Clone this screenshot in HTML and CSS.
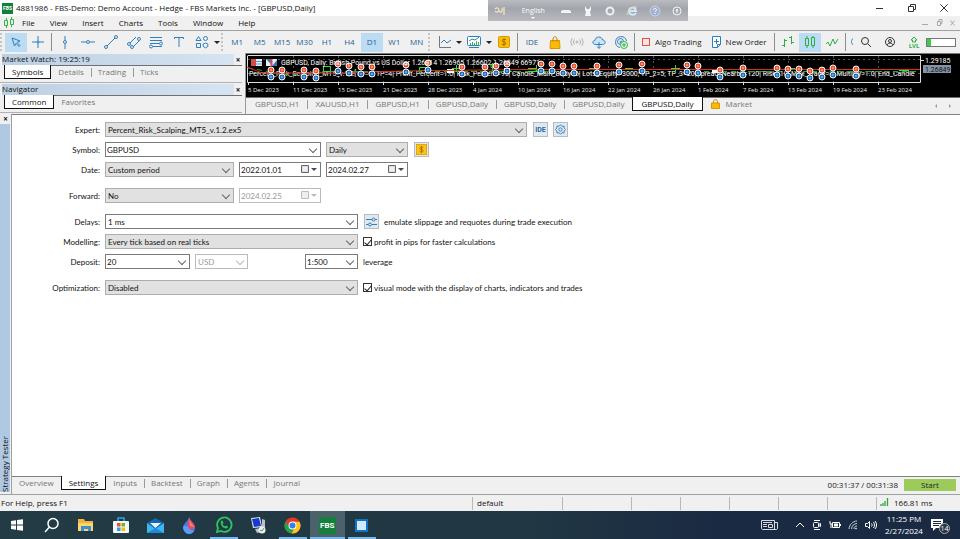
FILE: index.html
```html
<!DOCTYPE html>
<html lang="en">
<head>
  <meta charset="UTF-8" />
  <meta name="viewport" content="width=device-width, initial-scale=1" />
  <title>4881986 - FBS-Demo: Demo Account - Hedge - FBS Markets Inc. - [GBPUSD,Daily]</title>
  <link rel="stylesheet" href="styles.css">
</head>
<body>
  <header class="titlebar">
    <span class="fbs-logo">FBS</span>
    <h1>4881986 - FBS-Demo: Demo Account - Hedge - FBS Markets Inc. - [GBPUSD,Daily]</h1>
    <div class="window-buttons">
      <button aria-label="Minimize"><svg width="8" height="8" viewBox="0 0 8 8"><path d="M0 4.5h7"/></svg></button>
      <button aria-label="Restore"><svg width="8" height="8" viewBox="0 0 8 8"><path d="M.5 2.5h5v5h-5zM2.5 2.500v-2h5v5h-2"/></svg></button>
      <button aria-label="Close"><svg width="8" height="8" viewBox="0 0 8 8"><path d="M.5.5l7 7M7.500.5l-7 7"/></svg></button>
    </div>
  </header>

  <div class="langbar">
    <svg width="14" height="12" viewBox="0 0 14 12" fill="none" stroke="#f3e3c4" stroke-width="1.300"><path d="M2 4c2-2 4-1 4 1s-3 3-4 1M6 6c2 3 4 0 3-3M11 2v8"/></svg>
    <span class="lang">English</span>
    <svg width="12" height="12" viewBox="0 0 12 12" fill="#f4f5f6"><path d="M1 8V6l2-1h6l2 1v2z"/></svg>
    <svg width="12" height="12" viewBox="0 0 12 12" fill="#f4f5f6"><path d="M3 1l2 3h2l2-3v4l-1 2 1 4H3l1-4-1-2z"/></svg>
    <svg width="12" height="12" viewBox="0 0 12 12" fill="none" stroke="#eef0f2" stroke-width="2"><circle cx="6" cy="6" r="3.500"/></svg>
    <svg width="12" height="12" viewBox="0 0 12 12" fill="none" stroke="#cfe9f8" stroke-width="2"><path d="M10 8c-2 3-7 2-7-2s6-5 7 0H4"/><path d="M1 10C1 6 6 1 11 2" stroke="#e9d9a6" stroke-width="1"/></svg>
    <svg width="12" height="12" viewBox="0 0 12 12"><circle cx="6" cy="6" r="5" fill="#a3b2d4" stroke="#ccd3e2"/><path d="M4.500 5c0-2 3-2 3 0 0 1-1.500 1-1.500 2M6 8v1" fill="none" stroke="#fff"/></svg>
    <svg width="12" height="12" viewBox="0 0 12 12" fill="none" stroke="#f4f5f6"><circle cx="6" cy="6" r="4"/><path d="M6 4v4M5 6l1-2 1 2"/></svg>
  </div>

  <nav class="menubar">
    <svg width="12" height="12" viewBox="0 0 12 12" fill="none" stroke="#35b44a"><path d="M3.500 1v2M3.500 9v2M1.500 3.500h3v5h-3zM8.500 0v2M8.500 8v2M7.500 2.500h3v5h-3z"/></svg>
    <button>File</button>
    <button>View</button>
    <button>Insert</button>
    <button>Charts</button>
    <button>Tools</button>
    <button>Window</button>
    <button>Help</button>
    <svg class="mdi" width="36" height="8" viewBox="0 0 36 8" fill="none" stroke="#a9a9a9"><path d="M1 5.500h6M16.500 2.500h3v4h-3zM18 2V.5h3v4h-1M29.500 1.500l4 5M33.500 1.500l-4 5"/></svg>
  </nav>

  <div class="toolbar">
    <i class="grip"></i>
    <button class="tool on" aria-label="Cursor"><svg width="14" height="14" viewBox="0 0 14 14"><path d="M3 3l8 3-3 1.500 3 3-1 1-3-3L5.500 11z"/></svg></button>
    <button class="tool" aria-label="Crosshair"><svg width="14" height="14" viewBox="0 0 14 14"><path d="M7 1v12M1 7h12"/><circle cx="7" cy="7" r="1" fill="#f0f0f0"/></svg></button>
    <i class="sep"></i>
    <div class="draw-tools">
      <button class="tool" aria-label="Vertical line"><svg width="14" height="14" viewBox="0 0 14 14"><path d="M7 1v4M7 9v5"/><circle cx="7" cy="7" r="1.500"/></svg></button>
      <button class="tool" aria-label="Horizontal line"><svg width="14" height="14" viewBox="0 0 14 14"><path d="M0 7h5M9 7h5"/><circle cx="7" cy="7" r="1.500"/></svg></button>
      <button class="tool" aria-label="Trendline"><svg width="14" height="14" viewBox="0 0 14 14"><path d="M3 11l8-8"/><circle cx="2" cy="12" r="1.500"/><circle cx="12" cy="2" r="1.500"/></svg></button>
      <button class="tool" aria-label="Channel"><svg width="14" height="14" viewBox="0 0 14 14"><path d="M3 8l6-6M6 12l6-6"/><circle cx="2" cy="9" r="1.500"/><circle cx="5" cy="12" r="1.500"/><circle cx="12" cy="4" r="1.500"/></svg></button>
      <button class="tool" aria-label="Fibonacci"><svg width="14" height="14" viewBox="0 0 14 14"><path d="M1 2.500h12M1 5.500h12M1 8.500h9M4 11.500h9"/><circle cx="2" cy="11.500" r="1.500"/><circle cx="12" cy="8.500" r="1.500"/></svg></button>
      <button class="tool" aria-label="Text"><svg width="14" height="14" viewBox="0 0 14 14"><path d="M2.500 4V2.500h9V4M7 2.500V12"/></svg></button>
      <button class="tool" aria-label="Objects"><svg width="14" height="14" viewBox="0 0 14 14"><path d="M1 5.500l2.500-4 2.500 4zM1.500 8.500h4v4h-4z"/><circle cx="10.500" cy="3.500" r="2"/><path d="M10.500 8l2.300 1v2.500l-2.300 1.300-2.300-1.300V9z"/></svg></button>
    </div>
    <i class="drop"></i>
    <i class="grip"></i>
    <div class="timeframes">
      <button>M1</button>
      <button>M5</button>
      <button>M15</button>
      <button>M30</button>
      <button>H1</button>
      <button>H4</button>
      <button class="on">D1</button>
      <button>W1</button>
      <button>MN</button>
    </div>
    <i class="grip"></i>
    <button class="tool" aria-label="Chart type"><svg width="14" height="14" viewBox="0 0 14 14"><path d="M2.500 1v11.500H14" stroke="#777"/><path d="M4 8l3-3 3 3 4-3"/></svg></button>
    <i class="drop"></i>
    <button class="tool" aria-label="Template"><svg width="14" height="14" viewBox="0 0 14 14"><rect x=".5" y="1.500" width="13" height="9" rx="1" fill="#fff"/><path d="M2 12.500h10"/><path d="M2 6l3-2 3 1 4-3"/><path d="M3.500 10V8M5.500 10V7M7.500 10V8M9.500 10V6M11.500 10V7" stroke="#35b44a"/></svg></button>
    <i class="drop"></i>
    <button class="tool" aria-label="Symbol"><svg width="12" height="12" viewBox="0 0 12 12"><rect x=".5" y=".5" width="11" height="11" rx="1" fill="#fbbd08" stroke="#d89a00"/><path d="M8 3.500H5C4 3.500 4 6 5 6h2c1 0 1 2.500 0 2.500H4M6 2v8" stroke="#a87000"/></svg></button>
    <i class="sep"></i>
    <button class="tool ide">IDE</button>
    <button class="tool" aria-label="Market"><svg width="12" height="13" viewBox="0 0 12 13"><path d="M1.500 4.500h9l.5 8H1z" fill="#fbb908" stroke="#dc9400"/><path d="M4 6V3c0-3 4-3 4 0v3" stroke="#c98300"/></svg></button>
    <button class="tool muted" aria-label="Signals"><svg width="14" height="12" viewBox="0 0 14 12"><circle cx="7" cy="6" r="1"/><path d="M4.500 3.500c-1.300 1.500-1.300 3.500 0 5M9.500 3.500c1.300 1.500 1.300 3.500 0 5M2.500 2c-2 2.500-2 5.500 0 8M11.500 2c2 2.500 2 5.500 0 8"/></svg></button>
    <button class="tool" aria-label="VPS"><svg width="14" height="14" viewBox="0 0 14 14"><path d="M4 9.500C0 9.500 0 5.500 3 5.500c0-4 7-5 7.500-.5 3.500 0 3.500 4.500 0 4.500z" fill="#cfe6f8"/><path d="M7 7v6M5 11.500l2 2 2-2"/></svg></button>
    <button class="tool" aria-label="Community"><svg width="14" height="14" viewBox="0 0 14 14"><path d="M6 12.500A5.500 5.500 0 1 1 12.500 6M6 9.500A3 3 0 1 1 9.500 6"/><circle cx="7" cy="7" r="1"/><circle cx="10" cy="10" r="3.500" fill="#e6f7e8" stroke="#35b44a"/><path d="M10 8v4M8 10h4" stroke="#35b44a"/></svg></button>
    <i class="sep"></i>
    <button class="text-tool"><svg width="9" height="9" viewBox="0 0 9 9"><rect x=".5" y=".5" width="7" height="7" fill="#fbe3dd" stroke="#d9534a"/></svg>Algo Trading</button>
    <button class="text-tool"><svg width="10" height="12" viewBox="0 0 10 12"><path d="M.5.5h8v8l-3 3h-5z" fill="#fff"/><path d="M4.500 3v5M2 5.500h5M8.500 8.500h-3v3"/></svg>New Order</button>
    <i class="sep"></i>
    <button class="tool green" aria-label="Bars"><svg width="14" height="14" viewBox="0 0 14 14"><path d="M3.500 4v8M1 10.500h2.500M3.500 5.500H6M10.500 1v8M8 2.500h2.500M10.500 7.500H13"/></svg></button>
    <button class="tool green on" aria-label="Candles"><svg width="14" height="14" viewBox="0 0 14 14"><path d="M2.500 3.500h3v7h-3zM4 1v2.500M4 10.500V13M8.500 2.500h3v8h-3zM10 1v1.500M10 10.500V13"/></svg></button>
    <button class="tool green" aria-label="Line"><svg width="14" height="14" viewBox="0 0 14 14"><path d="M1 9l2-2 2 4 3-7 2 5 3-5"/></svg></button>
    <i class="sep"></i>
    <div class="toolbar-end">
      <svg width="4" height="8" viewBox="0 0 4 8"><path d="M3 .5C1 2 1 5 3 7"/></svg>
      <button class="tool dark" aria-label="Search"><svg width="12" height="12" viewBox="0 0 12 12"><circle cx="5" cy="5" r="3.500"/><path d="M7.500 7.500L11 11"/></svg></button>
      <button class="tool dark" aria-label="Account"><svg width="12" height="12" viewBox="0 0 12 12"><circle cx="6" cy="6" r="4.500"/><circle cx="6" cy="5" r="1.500"/><path d="M3 9c1-2.500 5-2.500 6 0"/></svg></button>
      <button class="tool lvl" aria-label="Level"><svg width="8" height="7" viewBox="0 0 8 7"><path d="M2.500 6V4H1l3-3 3 3H5.500v2z"/></svg><span>LVL</span></button>
      <div class="level-bar"><i></i></div>
    </div>
  </div>

  <div class="workspace">
    <aside class="docks">
      <section class="dock">
        <div class="caption"><h2>Market Watch: 19:25:19</h2><button aria-label="Close">×</button></div>
        <div class="tabs">
          <button class="active">Symbols</button>
          <button>Details</button>
          <button>Trading</button>
          <button>Ticks</button>
        </div>
      </section>
      <section class="dock">
        <div class="caption"><h2>Navigator</h2><button aria-label="Close">×</button></div>
        <div class="tabs">
          <button class="active">Common</button>
          <button>Favorites</button>
        </div>
      </section>
    </aside>

    <main class="chart-pane">
      <svg class="chart" viewBox="0 0 714 44">
        <defs>
          <clipPath id="plot"><rect x="1" y="2" width="673" height="28"/></clipPath>
          <!-- sell mark above, buy mark below -->
          <g id="deal">
            <circle r="3" fill="#e8502e" stroke="#fff"/>
            <circle cy="7" r="3" fill="#1f6fbe" stroke="#fff"/>
            <path d="M0-1v2M-1 0h2M0 6v2M-1 7h2" fill="none" stroke="#fff" stroke-width=".4"/>
          </g>
        </defs>
        <rect width="714" height="44" fill="#000"/>
        <path d="M0 .5h714" stroke="#777"/>
        <path d="M2 6.500h672M2 20.500h672M47.500 3v26M92.500 3v26M137.500 3v26M182.500 3v26M227.500 3v26M272.500 3v26M317.500 3v26M362.500 3v26M407.500 3v26M452.500 3v26M497.500 3v26M542.500 3v26M587.500 3v26M632.500 3v26" stroke="#555" stroke-dasharray="2 3"/>
        <path d="M1.500 3v26.500h673V2.500H1.500" fill="none" stroke="#ddd"/>
        <path d="M2.500 29v3M47.500 29v3M92.500 29v3M137.500 29v3M182.500 29v3M227.500 29v3M272.500 29v3M317.500 29v3M362.500 29v3M407.500 29v3M452.500 29v3M497.500 29v3M542.500 29v3M587.500 29v3M632.500 29v3" stroke="#ddd"/>
        <g clip-path="url(#plot)">
          <text x="3" y="23" class="chart-comment">Percent_Risk_Scalping_MT5_v.1.2[TP=5] TP=4| Profit_Percent=1.0| Risk_Percent=95| Candle_Main_Body=6| Lots_Equity=3000; TP_2=5; TP_3=20|Spread_Nearby=120| Risk=10| Max_Trade=1| Multiply=1.0| End_Candle</text>
          <path d="M90 18.500h230M440 18.500h230M2 15l40 7 50-4" fill="none" stroke="#1fae2a" stroke-dasharray="5 4"/>
          <path d="M77.500 13.500h7v5h-7zM173.500 14.500h7v3h-7zM206 15.500h9M245 11.500h7v3h-7zM282 15.500h8v3h-8M343 15.500h7M379 15.500h8M425 15.500h9M477 16.500h7M541 15.500h8M653 17.500h10M210.500 12v7M246.500 10v8M290.500 12v7M429.500 12v7" fill="#000" stroke="#32e23c"/>
          <path d="M201 16h7v4h-7zM258 15h6v3h-6zM466 17h6v3h-6z" fill="#fff"/>
          <path d="M1 14l15 6h80l60-2 120-1.500h398" fill="none" stroke="#e0281c"/>
          <use href="#deal" x="25" y="17"/><use href="#deal" x="36" y="17"/><use href="#deal" x="58" y="17"/><use href="#deal" x="70" y="18"/>
          <use href="#deal" x="92" y="11"/><use href="#deal" x="103" y="13"/><use href="#deal" x="115" y="14"/><use href="#deal" x="126" y="14"/>
          <use href="#deal" x="160" y="12"/><use href="#deal" x="182" y="10"/><use href="#deal" x="216" y="14"/><use href="#deal" x="239" y="14"/>
          <use href="#deal" x="250" y="13"/><use href="#deal" x="261" y="11"/><use href="#deal" x="295" y="11"/><use href="#deal" x="306" y="11"/>
          <use href="#deal" x="317" y="13"/><use href="#deal" x="328" y="13"/><use href="#deal" x="351" y="13"/><use href="#deal" x="373" y="12"/>
          <use href="#deal" x="396" y="11"/><use href="#deal" x="441" y="12"/><use href="#deal" x="452" y="13"/><use href="#deal" x="474" y="17"/>
          <use href="#deal" x="497" y="15"/><use href="#deal" x="531" y="15"/><use href="#deal" x="542" y="16"/><use href="#deal" x="553" y="16"/>
          <use href="#deal" x="564" y="18"/><use href="#deal" x="576" y="17"/><use href="#deal" x="587" y="15"/><use href="#deal" x="610" y="16"/>
        </g>
        <path d="M5 6h11v7H5z" fill="#e9eef5"/><path d="M5 6h5v7H5z" fill="#d84a43"/><path d="M10 8.500h6M10 11h6" stroke="#5a8fd0"/>
        <path d="M20 6h11v7H20z" fill="#e9eef5"/><path d="M20 6h5v5zM26 13h5V7z" fill="#3776bd"/><path d="M25.500 6v7" stroke="#d84a43" stroke-width="2"/>
        <text x="35" y="12" class="chart-comment">GBPUSD, Daily:  British Pound vs US Dollar  1.26814 1.26965 1.26602 1.26849  66971</text>
        <g class="chart-dates">
          <text x="2" y="39">5 Dec 2023</text><text x="47" y="39">11 Dec 2023</text><text x="92" y="39">15 Dec 2023</text>
          <text x="137" y="39">21 Dec 2023</text><text x="182" y="39">28 Dec 2023</text><text x="227" y="39">4 Jan 2024</text>
          <text x="272" y="39">10 Jan 2024</text><text x="317" y="39">16 Jan 2024</text><text x="362" y="39">22 Jan 2024</text>
          <text x="407" y="39">26 Jan 2024</text><text x="452" y="39">1 Feb 2024</text><text x="497" y="39">7 Feb 2024</text>
          <text x="542" y="39">13 Feb 2024</text><text x="587" y="39">19 Feb 2024</text><text x="632" y="39">23 Feb 2024</text>
        </g>
        <path d="M675 7.500h3" stroke="#ddd"/>
        <rect x="677" y="12" width="28" height="8" fill="#8593a8"/>
        <text x="679" y="10" class="chart-comment">1.29185</text>
        <text x="679" y="19" class="chart-price">1.26849</text>
      </svg>
      <div class="tabs chart-tabs">
        <button>GBPUSD,H1</button>
        <button>XAUUSD,H1</button>
        <button>GBPUSD,H1</button>
        <button>GBPUSD,Daily</button>
        <button>GBPUSD,Daily</button>
        <button>GBPUSD,Daily</button>
        <button class="active">GBPUSD,Daily</button>
        <button class="market"><svg width="9" height="10" viewBox="0 0 9 10"><path d="M.5 4h8v5.500h-8z" fill="#fbb908" stroke="#dc9400"/><path d="M2.500 4V2.500c0-2.500 4-2.500 4 0V4" fill="none" stroke="#c98300"/></svg>Market</button>
        <svg class="scroll" width="18" height="6" viewBox="0 0 18 6" fill="#999"><path d="M3 1v4L1 3zM15 1v4l2-2z"/></svg>
      </div>
    </main>
  </div>

  <section class="tester">
    <div class="tester-side">
      <button aria-label="Close">×</button>
      <h2>Strategy Tester</h2>
    </div>
    <div class="tester-main">
      <form class="settings">
        <div class="row">
          <label for="expert">Expert:</label>
          <span class="combo gray w-expert"><select id="expert"><option>Percent_Risk_Scalping_MT5_v.1.2.ex5</option></select></span>
          <button type="button" class="square">IDE</button>
          <button type="button" class="square" aria-label="Expert properties"><svg width="11" height="11" viewBox="0 0 12 12"><path d="M6 .8l1.500 1.700 2.300-.3.200 2.200L11.500 6 10 7.600l-.2 2.200-2.300-.3L6 11.200 4.500 9.500l-2.300.3L2 7.600.5 6 2 4.400l.2-2.200 2.300.3z"/><circle cx="6" cy="6" r="1.800"/></svg></button>
        </div>
        <div class="row">
          <label for="symbol">Symbol:</label>
          <span class="combo w-symbol"><input id="symbol" type="text" value="GBPUSD"></span>
          <span class="combo gray w-date"><select aria-label="Period"><option>Daily</option></select></span>
          <button type="button" class="square" aria-label="Symbol specification"><svg width="11" height="11" viewBox="0 0 12 12"><rect x=".5" y=".5" width="11" height="11" fill="#fcc419" stroke="#e0a400"/><path d="M8 3.500H5C4 3.500 4 6 5 6h2c1 0 1 2.500 0 2.500H4M6 2v8" stroke="#a87000"/></svg></button>
        </div>
        <div class="row group-end">
          <label for="date">Date:</label>
          <span class="combo gray w-period"><select id="date"><option>Custom period</option></select></span>
          <span class="combo date w-date"><input type="text" aria-label="From" value="2022.01.01"><svg width="9" height="9" viewBox="0 0 9 9"><path d="M.5.5h7v7h-7z" fill="#dcdfe3" stroke="#666"/><path d="M2 3h4M2 5h4" stroke="#fff"/></svg></span>
          <span class="combo date w-date"><input type="text" aria-label="To" value="2024.02.27"><svg width="9" height="9" viewBox="0 0 9 9"><path d="M.5.5h7v7h-7z" fill="#dcdfe3" stroke="#666"/><path d="M2 3h4M2 5h4" stroke="#fff"/></svg></span>
        </div>
        <div class="row group-end">
          <label for="forward">Forward:</label>
          <span class="combo gray w-period"><select id="forward"><option>No</option></select></span>
          <span class="combo date off w-date"><input type="text" aria-label="Forward date" value="2024.02.25" disabled><svg width="9" height="9" viewBox="0 0 9 9"><path d="M.5.5h7v7h-7z" fill="#eee" stroke="#bbb"/></svg></span>
        </div>
        <div class="row">
          <label for="delays">Delays:</label>
          <span class="combo w-wide"><select id="delays"><option>1 ms</option></select></span>
          <button type="button" class="square" aria-label="Delay settings"><svg width="12" height="12" viewBox="0 0 12 12"><path d="M0 3.500h6M9 3.500h2M0 8.500h2M6 8.500h5"/><circle cx="7.500" cy="3.500" r="1.500"/><circle cx="4" cy="8.500" r="1.500"/></svg></button>
          <span class="note">emulate slippage and requotes during trade execution</span>
        </div>
        <div class="row">
          <label for="modelling">Modelling:</label>
          <span class="combo gray w-wide"><select id="modelling"><option>Every tick based on real ticks</option></select></span>
          <label class="check"><input type="checkbox" checked>profit in pips for faster calculations</label>
        </div>
        <div class="row group-end">
          <label for="deposit">Deposit:</label>
          <span class="combo w-deposit"><input id="deposit" type="text" value="20"></span>
          <span class="combo off w-small"><select aria-label="Currency" disabled><option>USD</option></select></span>
          <span class="combo w-small leverage"><input id="leverage" type="text" value="1:500"></span>
          <label class="after" for="leverage">leverage</label>
        </div>
        <div class="row">
          <label for="optimization">Optimization:</label>
          <span class="combo gray w-wide"><select id="optimization"><option>Disabled</option></select></span>
          <label class="check"><input type="checkbox" checked>visual mode with the display of charts, indicators and trades</label>
        </div>
      </form>
      <div class="tabs tester-tabs">
        <button>Overview</button>
        <button class="active">Settings</button>
        <button>Inputs</button>
        <button>Backtest</button>
        <button>Graph</button>
        <button>Agents</button>
        <button>Journal</button>
        <span class="elapsed">00:31:37 / 00:31:38</span>
        <button class="start">Start</button>
      </div>
    </div>
  </section>

  <footer class="statusbar">
    <span class="help">For Help, press F1</span>
    <span class="profile">default</span>
    <span class="wide"></span>
    <span></span>
    <span></span>
    <span></span>
    <span></span>
    <span></span>
    <span class="ping"><svg width="9" height="8" viewBox="0 0 9 8" stroke="#2fa63d"><path d="M1 8V6M3 8V5M5 8V3M7.500 8V0" stroke-width="1.300"/></svg>166.81 ms</span>
  </footer>

  <div class="taskbar">
    <div class="apps">
      <button aria-label="Start menu"><svg width="14" height="14" viewBox="0 0 14 14" fill="#fff"><path d="M1 3l5-.7v4.200H1zM7 2.100l6-.9v5.300H7zM1 7.500h5v4.200L1 11zM7 7.500h6v5.300l-6-.9z"/></svg></button>
      <button aria-label="Search"><svg width="16" height="16" viewBox="0 0 16 16" fill="none" stroke="#fff" stroke-width="1.500"><circle cx="9" cy="6.500" r="5"/><path d="M5.500 10L1 15"/></svg></button>
      <button aria-label="File Explorer"><svg width="16" height="14" viewBox="0 0 16 14"><path d="M0 1h6l1 2h8v10H0z" fill="#f0b43c"/><path d="M0 5h15v8H0z" fill="#fbd76b"/><path d="M3 13V8h10v5h-3v-2H6v2z" fill="#3b8fd4"/></svg></button>
      <button aria-label="Store"><svg width="16" height="16" viewBox="0 0 16 16"><path d="M5 4V1h6v3" fill="none" stroke="#27a7e7" stroke-width="1.500"/><rect y="4" width="16" height="12" rx="1" fill="#f4f6f8"/><path d="M4 6h3.500v3.500H4z" fill="#e8502f"/><path d="M8.500 6H12v3.500H8.500z" fill="#7cb518"/><path d="M4 10.500h3.500V14H4z" fill="#22a0e8"/><path d="M8.500 10.500H12V14H8.500z" fill="#fbb908"/></svg></button>
      <button aria-label="Mail"><svg width="17" height="15" viewBox="0 0 17 15"><path d="M0 5l8.500-5L17 5v10H0z" fill="#1467b3"/><path d="M3 5h11l-5.500 5z" fill="#e8f4fb"/><path d="M0 5l8.500 6L17 5v10H0z" fill="#3fb6ee"/><path d="M0 15l8.500-5L17 15z" fill="#1c8ad6"/></svg></button>
      <button aria-label="Paint"><svg width="14" height="17" viewBox="0 0 14 17"><path d="M7 0c1 4 6 6 6 11 0 3-3 6-6 6s-6-3-6-6c0-5 5-6 6-11z" fill="#3f7be0"/><path d="M7 0c1 4 6 6 6 11l-5 2C3 10 7 5 7 0z" fill="#e8467c"/><path d="M7 2c1 4 4 5 5 8l-4-1z" fill="#f58a3c"/><path d="M1.500 9c2-1 5 0 6 3 2 2 4 2 5 1-2 5-8 5-10 1-1-1-1.500-3-1-5z" fill="#5b9cf0"/></svg></button>
      <button class="open" aria-label="WhatsApp"><svg width="18" height="18" viewBox="0 0 18 18" fill="none"><path d="M2 16l1-4a7.200 7.200 0 1 1 3 3z" stroke="#2bc55c" stroke-width="1.800"/><path d="M6 5l1.500-.5 1 2.500-1 1c.5 1.500 1.500 2 2.500 2.500l1-1 2 1c0 2-2 2.500-4 1.500-2-1-4-4-3-7z" fill="#2bc55c"/></svg></button>
      <button aria-label="Remote setup"><svg width="17" height="17" viewBox="0 0 17 17"><path d="M1 1l9-1 2 10-9 1z" fill="#dfe5ec"/><path d="M2 2l7-1 2 8-7 1z" fill="#1439d4"/><path d="M12 2l3 1v9l-3 1zM5 12l8-1 1 3-7 2z" fill="#b9c2cc"/><circle cx="12" cy="13" r="3.500" fill="#eef2ee"/><path d="M10 13l2 1 2-3" stroke="#4b9c55" fill="none"/></svg></button>
      <button class="open" aria-label="Chrome"><svg width="17" height="17" viewBox="0 0 18 18"><circle cx="9" cy="9" r="8.500" fill="#e0382b"/><path d="M1.600 4.800A8.500 8.500 0 0 0 8 17.400L11.500 11 5 9z" fill="#22a34b"/><path d="M9 5h7.500A8.500 8.500 0 0 1 8 17.400l4-7z" fill="#fbc51b"/><circle cx="9" cy="9" r="4.200" fill="#fff"/><circle cx="9" cy="9" r="3.200" fill="#3d7de8"/></svg></button>
      <button class="open current" aria-label="FBS terminal"><span class="fbs-logo big">FBS</span></button>
      <button class="open" aria-label="Metatester"><svg width="13" height="13" viewBox="0 0 13 13"><path d="M0 0h13v13H0z" fill="#1173c4"/><path d="M2 2h9v9H2z" fill="#cfeaff"/></svg></button>
    </div>
    <div class="tray">
      <svg class="news" width="18" height="12" viewBox="0 0 18 12" fill="none" stroke="#d7dbe0"><path d="M.5 1.500h13v9H2C1 10.500.5 10 .5 9zM13.500 3.500h3V9c0 1-.5 1.500-1.500 1.500h-2M2 3.500h9M7.500 5.500h4v3h-4zM2 5.500h4M2 7.500h4"/></svg>
      <svg width="10" height="8" viewBox="0 0 10 8" fill="none" stroke="#fff"><path d="M1 6l4-4 4 4"/></svg>
      <svg width="10" height="12" viewBox="0 0 10 12" fill="none" stroke="#fff"><rect x="1.500" y="3.500" width="5" height="5" rx="1"/><path d="M6.500 5.500l2-1v3l-2-1M2 1.500h6M2 10.500h6"/></svg>
      <svg width="12" height="10" viewBox="0 0 12 10" fill="none" stroke="#fff"><path d="M3.500 2.500h7v5h-7zM11.500 4v2M1 1v3h2M2 4v4"/><path d="M5 5h4" stroke-width="3"/></svg>
      <svg width="10" height="10" viewBox="0 0 10 10" fill="none" stroke="#c3cad3"><path d="M1 9C1 5 5 1 9 1M3.500 9C3.500 6 6 3.500 9 3.500M6 9c0-2 1-3 3-3"/><circle cx="8" cy="8.500" r=".6" fill="#fff"/></svg>
      <svg width="12" height="10" viewBox="0 0 12 10" fill="none" stroke="#fff"><path d="M.5 3.500h2l2-2v7l-2-2h-2zM6.500 3.500c.8 1 .8 2 0 3M8.500 2c1.300 2 1.300 4 0 6M10 1c2 2.500 2 5.500 0 8"/></svg>
      <time class="clock"><span>11:25 PM</span><span>2/27/2024</span></time>
      <button class="notices" aria-label="Notifications"><svg width="13" height="12" viewBox="0 0 13 12"><path d="M0 0h12v9H5l-3 3V9H0z" fill="#fff"/><path d="M2 2.500h8M2 4.500h8M2 6.500h6" stroke="#1b2c42"/></svg><span class="badge">14</span></button>
    </div>
  </div>
</body>
</html>
```
FILE: styles.css
```css
* {
  box-sizing: border-box;
}
body {
  margin: 0;
  min-height: 100vh;
  display: flex;
  flex-direction: column;
  font-family: "Open Sans", sans-serif;
  font-size: 8px;
  line-height: 12px;
  color: #111;
  background: #f0f0f0;
  overflow: hidden;
}
h1, h2 {
  margin: 0;
  font-size: 8px;
  font-weight: normal;
}
button {
  padding: 0;
  border: none;
  background: none;
  font: inherit;
  color: inherit;
  white-space: nowrap;
}
button svg {
  display: block;
}

/* title and menu */
.titlebar {
  display: flex;
  align-items: center;
  height: 16px;
  padding-left: 2px;
  background: #fff;
}
.fbs-logo {
  width: 11px;
  height: 11px;
  margin-right: 3px;
  background: #14803c;
  color: #fff;
  font: bold 5px/11px Roboto, sans-serif;
  text-align: center;
}
.window-buttons {
  display: flex;
  margin-left: auto;
}
.window-buttons button {
  width: 32px;
  display: flex;
  justify-content: center;
}
.window-buttons svg {
  fill: none;
  stroke: #333;
}
.langbar {
  position: absolute;
  top: 0;
  left: 488px;
  width: 200px;
  height: 21px;
  padding: 0 5px;
  display: flex;
  align-items: center;
  justify-content: space-between;
  background: linear-gradient(#b9bbc0, #a2a5ac 40%, #b8babf);
}
.lang {
  position: relative;
  width: 32px;
  text-align: center;
  font-size: 7px;
  color: #fff;
}
.lang::after {
  content: "";
  position: absolute;
  left: 14px;
  bottom: -2px;
  border: 2px solid transparent;
  border-top-color: #fff;
  border-bottom: none;
}
.menubar {
  display: flex;
  align-items: center;
  gap: 15px;
  height: 15px;
  padding: 0 3px;
  border-bottom: 1px solid #a0a0a0;
}
.menubar svg:first-child {
  margin-right: -8px;
}
.mdi {
  margin-left: auto;
}

/* toolbar */
.toolbar {
  display: flex;
  align-items: center;
  height: 22px;
  color: #1f5f96;
}
.toolbar svg {
  fill: none;
  stroke: #2f7fbf;
}
.grip {
  width: 5px;
  height: 18px;
  border-left: 2px dotted #c4c4c4;
}
.sep {
  width: 1px;
  height: 18px;
  margin: 0 2px;
  background: #8c8c8c;
}
.drop {
  width: 0;
  border: 3px solid transparent;
  border-top-color: #222;
  border-bottom: none;
  margin: 0 1px;
}
.tool {
  display: flex;
  flex: 0 0 22px;
  height: 19px;
  align-items: center;
  justify-content: center;
}
.draw-tools, .timeframes {
  display: flex;
  flex: 0 0 159px;
}
.draw-tools .tool {
  flex: 1;
}
.timeframes {
  flex-basis: 202px;
}
.timeframes button {
  flex: 1 0 0;
  height: 19px;
}
.toolbar .on {
  background: #bcdcf4;
}
.toolbar .ide {
  flex-basis: 24px;
}
.text-tool {
  display: flex;
  align-items: center;
  gap: 4px;
  padding: 0 5px;
  color: #222;
}
.toolbar .green svg, .toolbar .lvl svg {
  stroke: #2fae44;
}
.toolbar .dark svg {
  stroke: #333;
}
.toolbar .muted svg {
  stroke: #b0b0b0;
}
.toolbar-end {
  display: flex;
  align-items: center;
  margin-left: auto;
  padding-right: 4px;
}
.toolbar-end .tool {
  flex-basis: 24px;
}
.lvl {
  flex-direction: column;
  font-size: 6px;
  font-weight: bold;
  line-height: 6px;
  color: #2fae44;
}
.level-bar {
  width: 30px;
  height: 9px;
  border: 1px solid #777;
  background: #fff;
}
.level-bar i {
  display: block;
  width: 4px;
  height: 7px;
  background: #3fca4c;
}

/* tab strips share one look */
.tabs {
  display: flex;
  align-items: center;
  border-top: 1px solid #707070;
  color: #767676;
}
.tabs button {
  height: 14px;
  padding: 0 7px;
  margin-top: -1px;
  position: relative;
}
.tabs button + button:not(.active)::before {
  content: "";
  position: absolute;
  left: 0;
  top: 3px;
  height: 9px;
  border-left: 1px solid #999;
}
.tabs .active + button::before, .tabs .start::before {
  display: none;
}
.tabs .active {
  background: #fff;
  color: #111;
  border: 1px solid #111;
  border-top: none;
}

/* docks and chart */
.workspace {
  display: flex;
  height: 61px;
}
.docks {
  flex: 0 0 246px;
  padding-right: 3px;
  border-right: 1px solid #999;
}
.dock {
  height: 30px;
  padding-left: 2px;
  border-bottom: 1px solid #b0b0b0;
}
.caption {
  display: flex;
  height: 12px;
  padding-top: 1px;
}
.caption h2 {
  flex: 1;
  background: linear-gradient(90deg, #bccfe2, #d6e4f2);
  line-height: 10px;
}
.caption button {
  width: 8px;
  line-height: 10px;
  font-weight: bold;
}
.dock .tabs {
  margin-left: 2px;
}
.chart-pane {
  flex: 1;
  min-width: 0;
}
.chart {
  display: block;
  width: 100%;
}
.chart text {
  font-family: Roboto, sans-serif;
  font-size: 7px;
}
.chart .chart-comment {
  fill: #fff;
}
.chart .chart-price {
  fill: #111;
}
.chart .chart-dates text {
  font-family: "Open Sans", sans-serif;
  font-size: 6px;
  fill: #eee;
}
.chart-tabs {
  height: 16px;
  padding-left: 1px;
  align-items: flex-start;
}
.chart-tabs button {
  padding: 0 8px;
}
.market {
  display: flex;
  align-items: center;
  gap: 6px;
}
.scroll {
  margin: 5px 8px 0 auto;
}

/* strategy tester */
.tester {
  flex: 1;
  display: flex;
}
.tester-side {
  flex: 0 0 11px;
  display: flex;
  flex-direction: column;
}
.tester-side button {
  height: 10px;
  line-height: 10px;
  font-weight: bold;
}
.tester-side h2 {
  flex: 1;
  width: 10px;
  margin-bottom: 2px;
  writing-mode: vertical-rl;
  transform: rotate(180deg);
  background: #b0c9e3;
  line-height: 10px;
}
.tester-main {
  flex: 1;
  display: flex;
  flex-direction: column;
  border-top: 1px solid #808080;
  border-left: 1px solid #a0a0a0;
}
.settings {
  flex: 1;
  display: flex;
  flex-direction: column;
  gap: 5px;
  padding-top: 7px;
  background: #fff;
  font-family: Lato, sans-serif;
}
.row {
  display: flex;
  align-items: center;
  gap: 5px;
  height: 15px;
}
.group-end {
  margin-bottom: 6px;
}
.row > label:first-child {
  width: 88px;
  text-align: right;
}
.combo {
  position: relative;
  display: flex;
  height: 15px;
  border: 1px solid #7a7a7a;
  background: #fff;
}
.combo::after {
  content: "";
  position: absolute;
  right: 4px;
  top: 3px;
  width: 5px;
  height: 5px;
  border: solid #666;
  border-width: 0 1px 1px 0;
  transform: rotate(45deg);
  pointer-events: none;
}
.combo.gray {
  background: #e1e1e1;
  border-color: #adadad;
}
.combo.off {
  border-color: #bbb;
}
.combo.off::after {
  border-color: #bbb;
}
.combo select, .combo input {
  appearance: none;
  width: 100%;
  min-width: 0;
  padding: 0 2px;
  border: none;
  background: none;
  font: inherit;
  color: inherit;
}
.combo input {
  padding: 0 1px;
}
.combo :disabled {
  color: #9a9a9a;
  opacity: 1;
}
.date svg {
  position: absolute;
  right: 10px;
  top: 2px;
}
.date::after {
  width: 0;
  height: 0;
  top: 5px;
  right: 3px;
  border: 3px solid transparent;
  border-top-color: #3c4a63;
  border-bottom: none;
  transform: none;
}
.date.off::after {
  border-color: #bbb transparent transparent;
}
.w-expert {
  width: 422px;
}
.w-symbol {
  width: 216px;
}
.w-period {
  width: 129px;
}
.w-date {
  width: 82px;
}
.w-wide {
  width: 253px;
}
.w-deposit {
  width: 85px;
}
.w-small {
  width: 53px;
}
.leverage {
  margin-left: 52px;
}
.square {
  display: flex;
  align-items: center;
  justify-content: center;
  width: 15px;
  height: 15px;
  border: 1px solid #b5bcc4;
  background: #e3e8ed;
  color: #1f6aa5;
  font: bold 7px/12px Roboto, sans-serif;
}
.combo + .square {
  margin-left: 1px;
}
.square svg {
  fill: none;
  stroke: #2f7fbf;
}
.check {
  display: flex;
  align-items: center;
  gap: 2px;
}
.check input {
  appearance: none;
  width: 9px;
  height: 9px;
  margin: 0;
  border: 1px solid #333;
  display: flex;
  justify-content: center;
}
.check input:checked::after {
  content: "";
  width: 3px;
  height: 6px;
  border: solid #222;
  border-width: 0 1px 1px 0;
  transform: rotate(40deg);
}
.tester-tabs {
  height: 18px;
  padding-right: 4px;
  align-items: flex-start;
  border-color: #808080;
}
.elapsed {
  margin: 2px 6px 0 auto;
  color: #222;
}
.tabs .start {
  width: 52px;
  height: 12px;
  margin-top: 2px;
  background: #9ccb5c;
  color: #222;
}

/* status bar */
.statusbar {
  display: flex;
  align-items: center;
  height: 17px;
  border-top: 1px solid #a0a0a0;
}
.statusbar span {
  flex: 0 0 49px;
  height: 13px;
  border-left: 1px solid #b8b8b8;
}
.statusbar .help {
  flex: 1;
  border: none;
  padding-left: 1px;
}
.statusbar .profile {
  flex-basis: 90px;
  padding-left: 4px;
}
.statusbar .wide {
  flex-basis: 69px;
}
.statusbar .ping {
  flex-basis: 84px;
  padding-left: 3px;
}
.ping svg {
  margin-right: 5px;
}

/* taskbar */
.taskbar {
  display: flex;
  height: 28px;
  background: linear-gradient(90deg, #223b45, #213743 55%, #1a2a43 75%, #1a2a43);
  color: #fff;
}
.apps {
  display: flex;
  flex: 0 0 379px;
}
.apps button {
  flex: 1;
  display: flex;
  align-items: center;
  justify-content: center;
  position: relative;
}
.apps .current {
  background: #4c626b;
}
.open::after {
  content: "";
  position: absolute;
  left: 3px;
  right: 3px;
  bottom: 0;
  height: 2px;
  background: #76b9ed;
}
.current::after {
  left: 0;
  right: 0;
}
.big {
  width: 17px;
  height: 17px;
  margin: 0;
  font-size: 8px;
  line-height: 17px;
}
.tray {
  display: flex;
  align-items: center;
  gap: 7px;
  margin-left: auto;
  padding-right: 10px;
}
.news {
  margin-right: 9px;
}
.clock {
  display: flex;
  flex-direction: column;
  align-items: center;
  width: 40px;
}
.notices {
  position: relative;
  width: 19px;
}
.badge {
  position: absolute;
  right: 0;
  top: 4px;
  width: 11px;
  height: 11px;
  border: 1px solid #aaa;
  border-radius: 50%;
  background: #2a3648;
  font-size: 7px;
  line-height: 9px;
}
```
